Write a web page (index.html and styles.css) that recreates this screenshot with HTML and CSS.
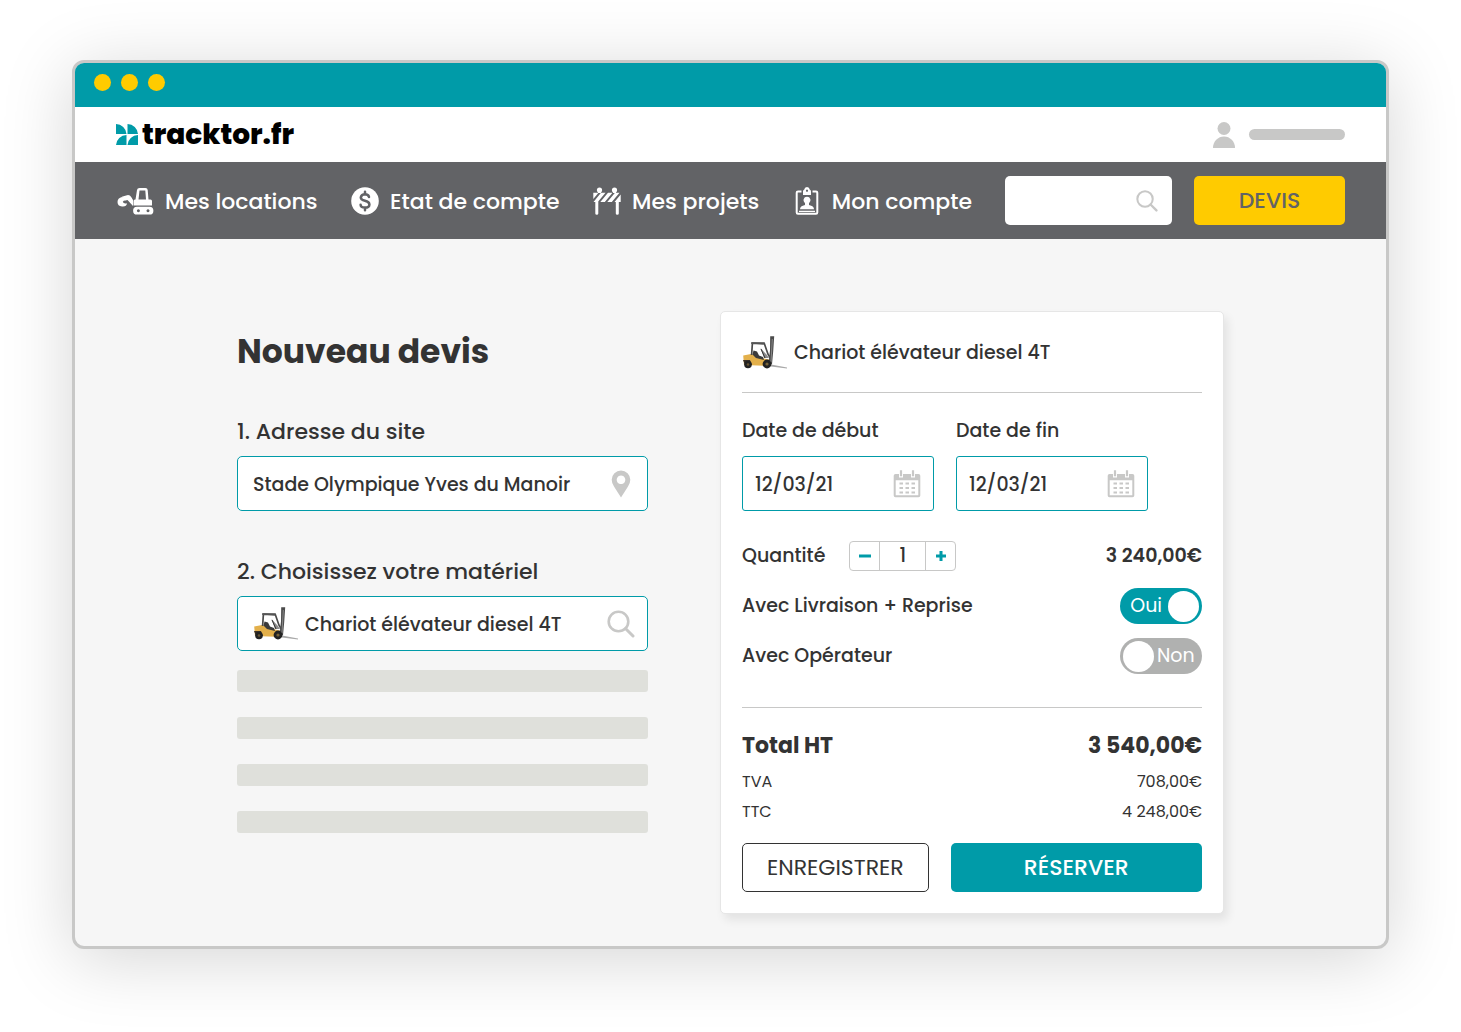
FILE: index.html
```html
<!DOCTYPE html>
<html lang="fr">
<head>
<meta charset="utf-8">
<meta name="viewport" content="width=device-width, initial-scale=1">
<title>tracktor.fr – Nouveau devis</title>
<link rel="stylesheet" href="styles.css">
</head>
<body>
<svg class="sprite" aria-hidden="true">
  <symbol id="forklift" viewBox="0 0 46 35">
    <path d="M29 29.5 45 32.6v.8l-16-2z" fill="#a9a9a9"/>
    <path d="M1.2 20.4 9 19l5 1.5 8 3 7 1.5v6L2 30z" fill="#e3b04b"/>
    <path d="M1 25h7l2 5H3z" fill="#3a3026"/>
    <path d="M9.6 20 10.4 8.2l12 .6 3.6 10.4 3 5" fill="none" stroke="#4a4a4a" stroke-width="1.7"/>
    <path d="M9.2 7.2h13.6v1.8H9.2z" fill="#555"/>
    <path d="M11.5 15.5l3.5 1 2 4 4 1.5 1 3-8-2-3.500-3.500z" fill="#3b3b3b"/>
    <path d="M18.500 13l3.500 10h5l-2.500-3.500z" fill="#8a8a8a"/>
    <path d="M19 14l4 9" stroke="#333" stroke-width="1"/>
    <path d="M28.200 1.200h4l-1 15-1.200 13h-3.500l1.500-14z" fill="#4b4b4b"/>
    <path d="M30.300 4 29 27" stroke="#a5a5a5" stroke-width=".7"/>
    <circle cx="6" cy="29.500" r="3.800" fill="#222"/><circle cx="6" cy="29.500" r="1.300" fill="#665534"/>
    <circle cx="25" cy="29" r="4.400" fill="#222"/><circle cx="25" cy="29" r="1.600" fill="#77633a"/>
  </symbol>
  <symbol id="search" viewBox="0 0 28 28">
    <circle cx="11.500" cy="11.500" r="9.800" fill="none" stroke="currentColor" stroke-width="2.600"/>
    <path d="M18.500 18.500 26 26" stroke="currentColor" stroke-width="3" stroke-linecap="round"/>
  </symbol>
  <symbol id="calendar" viewBox="0 0 28 28">
    <path d="M2.500 4H6v3.500h4V4h8v3.500h4V4h3.500A1.800 1.800 0 0 1 27.300 5.800V25.500A1.800 1.800 0 0 1 25.500 27.300h-23A1.800 1.800 0 0 1 .7 25.500V5.800A1.800 1.800 0 0 1 2.500 4zM2.700 10.300V25.300H25.300V10.300z" fill="currentColor" fill-rule="evenodd"/>
    <path d="M8 .3v6M20 .3v6" stroke="currentColor" stroke-width="2.200"/>
    <path d="M6.500 13.500h16M6.500 18h16M6.500 22.500h16" stroke="currentColor" stroke-width="2" stroke-dasharray="3.500 2.500"/>
  </symbol>
</svg>

<div class="window">
  <div class="titlebar"><i class="dot"></i><i class="dot"></i><i class="dot"></i></div>

  <header class="header">
    <a class="logo" href="#">
      <svg class="logo-mark" viewBox="0 0 22 21" aria-hidden="true"><path d="M0 0a10.500 10.500 0 0 1 10.500 10H0zM11.500 0A10.500 10.500 0 0 1 22 10H11.500zM0 21A10.500 10.500 0 0 1 10.500 11V21zM11.500 21A10.500 10.500 0 0 1 22 11V21z" fill="#009ba8"/></svg>
      <span>tracktor.fr</span>
    </a>
    <div class="user">
      <svg class="user-icon" viewBox="0 0 22 26" aria-hidden="true"><circle cx="11" cy="6.500" r="6.500"/><path d="M0 26a11 11.500 0 0 1 22 0z"/></svg>
      <span class="user-name"></span>
    </div>
  </header>

  <nav class="nav">
    <div class="nav-links">
      <a href="#">
        <svg class="icon-digger" viewBox="0 0 36 28" aria-hidden="true">
          <path d="M18.500 12.500 20 3Q20.300 1 22.500 1H28.500Q30.500 1 30.700 3L31.500 12.500H33.500Q35 12.500 35 14V18.500H16.500V14Q16.500 12.500 18 12.500zM22.500 3.500 21.500 12.500H29L28.300 3.500z" fill="currentColor" fill-rule="evenodd"/>
          <path d="M20 19.800H32.500A3.900 3.900 0 0 1 32.500 27.600H20A3.900 3.900 0 0 1 20 19.800zM21.400 22.300a1.500 1.500 0 1 0 .01 0zM31 22.300a1.500 1.500 0 1 0 .01 0z" fill="currentColor" fill-rule="evenodd"/>
          <path d="M4.800 9.800 10 8.200Q12.800 7.600 14.200 10L16 13V19L10.500 13 7.500 13.800z" fill="currentColor"/>
          <path d="M5 10Q.5 11 .5 15T5 19.500Q9.500 20 10 16.300 6.500 17 5.800 14.800L8.500 12z" fill="currentColor"/>
        </svg>
        <span>Mes locations</span>
      </a>
      <a href="#">
        <svg class="icon-nav" viewBox="0 0 28 28" aria-hidden="true">
          <circle cx="14" cy="14" r="13.800" fill="currentColor"/>
          <path d="M18 10Q17.500 7.300 14 7.300T9.800 10.400Q9.800 12.800 14 13.800T18.400 17.400Q18.400 20.600 14 20.600T9.600 17.800M14 4.800V7.500M14 20.500V23.200" fill="none" stroke="#626366" stroke-width="2.500" stroke-linecap="round"/>
        </svg>
        <span>Etat de compte</span>
      </a>
      <a href="#">
        <svg class="icon-nav" viewBox="0 0 28 28" aria-hidden="true">
          <g fill="currentColor"><circle cx="6.500" cy="3" r="2.600"/><circle cx="21.500" cy="3" r="2.600"/>
          <path d="M5 4h3v2H5zM20 4h3v2h-3zM.3 5.800H5.500L.3 12zM8 5.800H12.500L4.800 15H.5zM15 5.800H19.500L11.800 15H7.300zM22 5.800H26.500L18.800 15H14.300zM27.700 7.500V15H21.500zM2.300 14H5.300V26.500Q5.300 27.800 3.800 27.800T2.300 26.500zM22.800 14H25.800V26.500Q25.800 27.800 24.300 27.800T22.800 26.500z"/></g>
        </svg>
        <span>Mes projets</span>
      </a>
      <a href="#">
        <svg class="icon-nav" viewBox="-2.500 0 28 28" aria-hidden="true">
          <path d="M6 4.500H2.500Q1.200 4.500 1.200 5.800V25.500Q1.200 26.800 2.500 26.800H20.500Q21.800 26.800 21.800 25.500V5.800Q21.800 4.500 20.500 4.500H17" fill="none" stroke="currentColor" stroke-width="2"/>
          <path d="M11.500 0Q14 0 14.200 2.500 15.500 3 15.500 4.500V8H7.500V4.500Q7.500 3 8.800 2.500 9 0 11.500 0zM11.500 2.600a1.100 1.100 0 1 0 .01 0z" fill="currentColor" fill-rule="evenodd"/>
          <path d="M11.500 9.800a3.500 3.500 0 0 1 2 6.400V18Q18.500 19 18.500 22.300H4.500Q4.500 19 9.500 18V16.200a3.500 3.500 0 0 1 2-6.400zM3.500 23.800H19.500V25H3.500z" fill="currentColor"/>
        </svg>
        <span>Mon compte</span>
      </a>
    </div>
    <label class="nav-search">
      <input type="search" aria-label="Rechercher">
      <svg class="icon-search-small" aria-hidden="true"><use href="#search"/></svg>
    </label>
    <button class="btn btn-quote" type="button">DEVIS</button>
  </nav>

  <main class="content">
    <section class="form">
      <h1>Nouveau devis</h1>
      <div class="step">
        <label for="address">1. Adresse du site</label>
        <div class="box">
          <input id="address" type="text" value="Stade Olympique Yves du Manoir">
          <svg class="icon-pin" viewBox="0 0 20 28" aria-hidden="true"><path d="M10 .5a9.300 9.300 0 0 1 9.300 9.300Q19.300 13 17 16.500L10 27.500 3 16.500Q.7 13 .7 9.800A9.300 9.300 0 0 1 10 .5zM10 5.500a4.300 4.300 0 1 0 .01 0z" fill="currentColor" fill-rule="evenodd"/></svg>
        </div>
      </div>
      <div class="step">
        <label for="equipment">2. Choisissez votre matériel</label>
        <div class="box">
          <svg class="forklift" aria-hidden="true"><use href="#forklift"/></svg>
          <input id="equipment" type="text" value="Chariot élévateur diesel 4T">
          <svg class="icon-search" aria-hidden="true"><use href="#search"/></svg>
        </div>
      </div>
      <div class="results"><i></i><i></i><i></i><i></i></div>
    </section>

    <section class="card">
      <div class="card-head">
        <svg class="forklift" aria-hidden="true"><use href="#forklift"/></svg>
        <span>Chariot élévateur diesel 4T</span>
      </div>
      <div class="dates">
        <div class="date">
          <label for="start">Date de début</label>
          <div class="box box-date"><input id="start" type="text" value="12/03/21"><svg class="icon-calendar" aria-hidden="true"><use href="#calendar"/></svg></div>
        </div>
        <div class="date">
          <label for="end">Date de fin</label>
          <div class="box box-date"><input id="end" type="text" value="12/03/21"><svg class="icon-calendar" aria-hidden="true"><use href="#calendar"/></svg></div>
        </div>
      </div>
      <div class="options">
        <div class="option">
          <label for="qty">Quantité</label>
          <div class="stepper">
            <button type="button" aria-label="Diminuer"><svg viewBox="0 0 12 12" aria-hidden="true"><path d="M0 6h12"/></svg></button>
            <input id="qty" type="text" inputmode="numeric" value="1">
            <button type="button" aria-label="Augmenter"><svg viewBox="0 0 12 12" aria-hidden="true"><path d="M1 6h10M6 1v10"/></svg></button>
          </div>
          <strong class="price">3 240,00€</strong>
        </div>
        <div class="option">
          <label for="delivery">Avec Livraison + Reprise</label>
          <label class="toggle toggle-on"><input id="delivery" type="checkbox" checked><span>Oui</span></label>
        </div>
        <div class="option">
          <label for="operator">Avec Opérateur</label>
          <label class="toggle"><input id="operator" type="checkbox"><span>Non</span></label>
        </div>
      </div>
      <dl class="totals">
        <div class="total"><dt>Total HT</dt><dd>3 540,00€</dd></div>
        <div><dt>TVA</dt><dd>708,00€</dd></div>
        <div><dt>TTC</dt><dd>4 248,00€</dd></div>
      </dl>
      <div class="actions">
        <button class="btn btn-save" type="button">ENREGISTRER</button>
        <button class="btn btn-book" type="button">RÉSERVER</button>
      </div>
    </section>
  </main>
</div>
</body>
</html>
```
FILE: styles.css
```css
:root {
  --teal: #009ba8;
  --yellow: #ffcb00;
  --slate: #626366;
  --ink: #333;
  --grey: #c8c8c7;
}

* { box-sizing: border-box; }

body {
  margin: 0;
  padding: 60px 72px 84px;
  background: #fff;
  color: var(--ink);
  font: 500 19px/28px Poppins, Inter, sans-serif;
}

.sprite { display: none; }
svg { display: block; flex: none; }

button, input { font: inherit; color: inherit; margin: 0; padding: 0; border: 0; background: none; }
input { min-width: 0; outline: 0; appearance: none; }
a { color: inherit; text-decoration: none; }

.window {
  border: 3px solid var(--grey);
  border-radius: 12px;
  background: #f6f6f6;
  box-shadow: 0 10px 70px rgba(0, 0, 0, .17);
  overflow: hidden;
}

.titlebar {
  display: flex;
  gap: 10px;
  height: 44px;
  padding: 11px 19px;
  background: var(--teal);
}
.dot { width: 17px; height: 17px; border-radius: 50%; background: var(--yellow); }

.header {
  display: flex;
  align-items: center;
  justify-content: space-between;
  height: 55px;
  padding: 0 41px;
  background: #fff;
}
.logo { display: flex; align-items: center; gap: 4px; color: #000; font-size: 28px; font-weight: 800; }
.logo-mark { width: 22px; height: 21px; }
.user { display: flex; align-items: center; gap: 14px; }
.user-icon { width: 22px; height: 26px; fill: var(--grey); }
.user-name { width: 96px; height: 11px; border-radius: 6px; background: var(--grey); }

.nav {
  display: flex;
  align-items: center;
  gap: 22px;
  height: 77px;
  padding: 0 41px;
  background: var(--slate);
}
.nav-links {
  display: flex;
  flex: 1;
  justify-content: space-between;
  margin-right: 11px;
  color: #fff;
  font-size: 22px;
  line-height: 32px;
  white-space: nowrap;
}
.nav-links a { display: flex; align-items: center; gap: 11px; }
.nav-links span, .card-head span, .box input { padding-top: 2px; }
.icon-digger { width: 38px; height: 28px; }
.icon-nav { width: 28px; height: 28px; }
.nav-search {
  display: flex;
  align-items: center;
  width: 167px;
  height: 49px;
  padding: 0 14px;
  border-radius: 5px;
  background: #fff;
}
.nav-search input { flex: 1; }
.icon-search-small { width: 22px; height: 22px; color: var(--grey); }

.btn { height: 49px; border-radius: 5px; font-size: 22px; cursor: pointer; }
.btn-quote { width: 151px; background: var(--yellow); color: var(--slate); }

.content {
  display: grid;
  grid-template-columns: minmax(0, 411fr) minmax(0, 504fr);
  align-items: start;
  gap: 72px;
  padding: 72px 162px 32px;
}

h1 { margin: 19px 0 43px; font-size: 33px; line-height: 44px; font-weight: 700; }
.step { margin-bottom: 46px; }
.step label { display: block; margin-bottom: 9px; font-size: 22px; line-height: 30px; }
.box {
  display: flex;
  align-items: center;
  gap: 6px;
  height: 55px;
  padding: 0 12px 0 15px;
  border: 1px solid var(--teal);
  border-radius: 5px;
  background: #fff;
}
.box input { flex: 1; }
.forklift { width: 46px; height: 35px; }
.icon-pin { width: 20px; height: 28px; margin-right: 4px; color: var(--grey); }
.icon-search, .icon-calendar { width: 28px; height: 28px; color: var(--grey); }

.results { display: grid; gap: 25px; margin-top: -27px; }
.results i { height: 22px; border-radius: 3px; background: #dfe0db; }

.card {
  padding: 0 21px 21px;
  border: 1px solid #e6e6e6;
  border-radius: 5px;
  background: #fff;
  box-shadow: 4px 6px 10px rgba(0, 0, 0, .08);
}
.card-head {
  display: flex;
  align-items: center;
  gap: 6px;
  height: 81px;
  border-bottom: 1px solid var(--grey);
}
.dates { display: flex; gap: 22px; padding-top: 24px; }
.date { width: 192px; }
.date label { display: block; margin-bottom: 11px; }
.box-date { padding: 0 12px; border-radius: 3px; }

.options {
  display: grid;
  gap: 14px;
  padding: 27px 0 33px;
  border-bottom: 1px solid var(--grey);
}
.option { display: flex; align-items: center; justify-content: space-between; height: 36px; }
.stepper {
  display: flex;
  width: 107px;
  height: 30px;
  margin: 0 auto 0 24px;
  border: 1px solid var(--grey);
  border-radius: 4px;
}
.stepper button { display: grid; place-items: center; width: 29px; }
.stepper input { flex: 1; border: solid var(--grey); border-width: 0 1px; text-align: center; }
.stepper svg { width: 12px; height: 12px; stroke: var(--teal); stroke-width: 3; }
.price { font-weight: 600; }

.toggle {
  display: flex;
  align-items: center;
  gap: 3px;
  width: 82px;
  height: 36px;
  padding: 0 3px;
  border-radius: 18px;
  background: #b0b1b0;
  color: #fff;
  font-weight: 400;
}
.toggle-on { flex-direction: row-reverse; gap: 6px; background: var(--teal); }
.toggle input { width: 31px; height: 31px; border-radius: 50%; background: #fff; }

.totals { margin: 23px 0 16px; font-size: 16px; font-weight: 400; }
.totals div { display: flex; align-items: center; justify-content: space-between; height: 30px; }
.totals dd { margin: 0; }
.totals .total { margin-bottom: 6px; font-size: 22px; font-weight: 700; }

.actions { display: flex; gap: 22px; }
.btn-save { flex: 185 0 0; border: 1px solid var(--ink); background: #fff; font-weight: 400; }
.btn-book { flex: 252 0 0; background: var(--teal); color: #fff; }
```
